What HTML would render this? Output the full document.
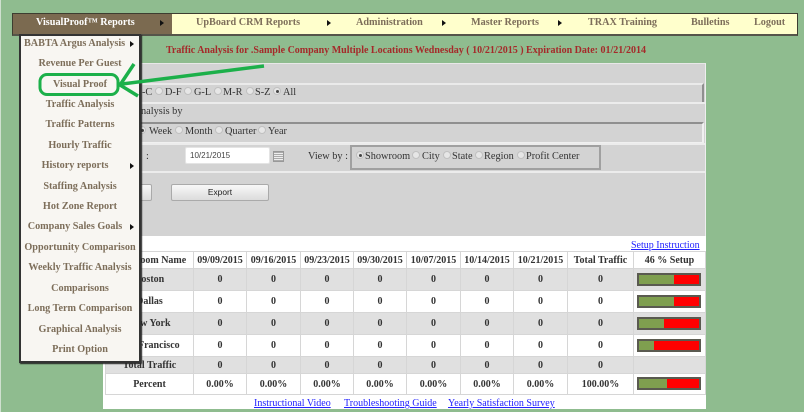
<!DOCTYPE html>
<html><head><meta charset="utf-8">
<style>
html,body{margin:0;padding:0}
body{width:804px;height:412px;overflow:hidden;position:relative;background:#8fbc8f;font-family:"Liberation Serif",serif;color:#333;filter:blur(.3px)}
div,span,a{position:absolute;white-space:nowrap}
.m{top:13px;height:20px;line-height:20px;font-size:10.2px;font-weight:bold;color:#7d6e5a}
.tri{width:0;height:0;border-left:4px solid #111;border-top:3.5px solid transparent;border-bottom:3.5px solid transparent}
.i{left:21px;width:118px;text-align:center;font-size:10.2px;font-weight:bold;color:#7d6e5a;height:20px;line-height:20px;margin-top:2px}
.r{width:6px;height:6px;border-radius:50%;background:#e6e6e6;border:1px solid #c0c0c0}
.r.c:after{content:"";position:absolute;left:1.5px;top:1.5px;width:3px;height:3px;border-radius:50%;background:#444}
.t{font-size:10.3px;color:#333;line-height:14px;height:14px;margin-top:1px}
a{color:#22f;text-decoration:underline;font-size:10px;line-height:14px}
table{position:absolute;left:105px;top:251px;width:600px;border-collapse:collapse;table-layout:fixed;font-size:10px;font-weight:bold;color:#333;background:#fff}
td{border:1px solid #d6d6d6;text-align:center;padding:0;white-space:nowrap;overflow:hidden}
tr.g td{background:#e0e0e0}
.b{left:637px;width:60px;height:9px;background:#f00;border:2px solid #5a5a50}
.b i{display:block;height:9px;background:#7f9f4f}
</style></head><body>
<div style="left:0;top:0;width:1px;height:412px;background:#cfe0cf"></div>

<div style="left:12px;top:13px;width:784px;height:20px;background:#ffc;border:1px solid #3d3d30;border-bottom:2px solid #55554a"></div>
<div style="left:13px;top:14px;width:159px;height:20px;background:#7b6a50"></div>
<div class="m" style="left:36px;color:#fff">VisualProof™ Reports</div>
<div class="tri" style="left:160px;top:20px"></div>
<div class="m" style="left:196px">UpBoard CRM Reports</div>
<div class="tri" style="left:327px;top:20px"></div>
<div class="m" style="left:356px">Administration</div>
<div class="tri" style="left:442px;top:20px"></div>
<div class="m" style="left:471px">Master Reports</div>
<div class="tri" style="left:558px;top:20px"></div>
<div class="m" style="left:588px">TRAX Training</div>
<div class="m" style="left:691px">Bulletins</div>
<div class="m" style="left:754px">Logout</div>

<div style="left:166px;top:43px;font-size:10px;font-weight:bold;color:#a52a2a;line-height:16px">Traffic Analysis for .Sample Company Multiple Locations Wednesday ( 10/21/2015 ) Expiration Date: 01/21/2014</div>

<div style="left:103px;top:63px;width:602px;height:173px;background:#d3d3d3;border-top:1px solid #e8e8e8;border-right:1px solid #eee"></div>
<div style="left:103px;top:236px;width:603px;height:173px;background:#fff"></div>

<div style="left:104px;top:83px;width:598px;height:17px;border-top:2px solid #eaeaea;border-right:2px solid #8f8f8f;border-bottom:2px solid #8f8f8f"></div>
<div style="left:104px;top:102px;width:601px;height:2px;background:#ececec"></div>
<div style="left:104px;top:122px;width:598px;height:18px;border-top:2px solid #8f8f8f;border-right:2px solid #f0f0f0;border-bottom:2px solid #f0f0f0"></div>
<div style="left:104px;top:143px;width:601px;height:2px;background:#ececec"></div>
<div style="left:104px;top:171px;width:601px;height:2px;background:#ececec"></div>

<div class="t" style="left:142px;top:85px">-C</div>
<div class="r" style="left:155px;top:87px"></div><div class="t" style="left:165px;top:85px">D-F</div>
<div class="r" style="left:184px;top:87px"></div><div class="t" style="left:194px;top:85px">G-L</div>
<div class="r" style="left:214px;top:87px"></div><div class="t" style="left:223px;top:85px">M-R</div>
<div class="r" style="left:246px;top:87px"></div><div class="t" style="left:255px;top:85px">S-Z</div>
<div class="r c" style="left:273px;top:87px"></div><div class="t" style="left:283px;top:85px">All</div>
<div class="t" style="left:141px;top:104px">nalysis by</div>
<div class="r c" style="left:138px;top:126px"></div><div class="t" style="left:149px;top:124px">Week</div>
<div class="r" style="left:175px;top:126px"></div><div class="t" style="left:185px;top:124px">Month</div>
<div class="r" style="left:215px;top:126px"></div><div class="t" style="left:225px;top:124px">Quarter</div>
<div class="r" style="left:258px;top:126px"></div><div class="t" style="left:268px;top:124px">Year</div>
<div class="t" style="left:146px;top:149px">:</div>

<div style="left:186px;top:148px;width:83px;height:15px;background:#fff;border-radius:1px;box-shadow:0 0 0 1px #e4e4e4;font:8px/16px 'Liberation Sans',sans-serif;color:#444;text-indent:4px">10/21/2015</div>
<div style="left:273px;top:151px;width:9px;height:9px;border:1px solid #999;background:repeating-linear-gradient(0deg,#aaa 0 1px,#eee 1px 2px)"></div>
<div class="t" style="left:308px;top:149px">View by :</div>
<div style="left:350px;top:145px;width:247px;height:21px;border:2px solid #a0a0a0"></div>
<div class="r c" style="left:356px;top:151px"></div><div class="t" style="left:365px;top:149px">Showroom</div>
<div class="r" style="left:412px;top:151px"></div><div class="t" style="left:422px;top:149px">City</div>
<div class="r" style="left:443px;top:151px"></div><div class="t" style="left:452px;top:149px">State</div>
<div class="r" style="left:475px;top:151px"></div><div class="t" style="left:484px;top:149px">Region</div>
<div class="r" style="left:517px;top:151px"></div><div class="t" style="left:526px;top:149px">Profit Center</div>

<div style="left:120px;top:184px;width:30px;height:15px;background:linear-gradient(#f8f8f8,#dcdcdc);border:1px solid #aaa;border-radius:2px"></div>
<div style="left:171px;top:184px;width:96px;height:15px;background:linear-gradient(#f8f8f8,#dcdcdc);border:1px solid #aaa;border-radius:2px;text-align:center;font:8.4px/15px 'Liberation Sans',sans-serif;color:#222">Export</div>

<a href="#" style="left:631px;top:239px">Setup Instruction</a>

<table>
<colgroup><col style="width:88px"><col style="width:53px"><col style="width:54px"><col style="width:53px"><col style="width:53px"><col style="width:54px"><col style="width:53px"><col style="width:54px"><col style="width:66px"><col style="width:72px"></colgroup>
<tr style="height:17px"><td>Showroom Name</td><td>09/09/2015</td><td>09/16/2015</td><td>09/23/2015</td><td>09/30/2015</td><td>10/07/2015</td><td>10/14/2015</td><td>10/21/2015</td><td>Total Traffic</td><td>46 % Setup</td></tr>
<tr class="g" style="height:22px"><td>Boston</td><td>0</td><td>0</td><td>0</td><td>0</td><td>0</td><td>0</td><td>0</td><td>0</td><td></td></tr>
<tr style="height:22px"><td>Dallas</td><td>0</td><td>0</td><td>0</td><td>0</td><td>0</td><td>0</td><td>0</td><td>0</td><td></td></tr>
<tr class="g" style="height:22px"><td>New York</td><td>0</td><td>0</td><td>0</td><td>0</td><td>0</td><td>0</td><td>0</td><td>0</td><td></td></tr>
<tr style="height:22px"><td>San Francisco</td><td>0</td><td>0</td><td>0</td><td>0</td><td>0</td><td>0</td><td>0</td><td>0</td><td></td></tr>
<tr class="g" style="height:17px"><td>Total Traffic</td><td>0</td><td>0</td><td>0</td><td>0</td><td>0</td><td>0</td><td>0</td><td>0</td><td></td></tr>
<tr style="height:21px"><td>Percent</td><td>0.00%</td><td>0.00%</td><td>0.00%</td><td>0.00%</td><td>0.00%</td><td>0.00%</td><td>0.00%</td><td>100.00%</td><td></td></tr>
</table>

<div class="b" style="top:273px"><i style="width:35px"></i></div>
<div class="b" style="top:295px"><i style="width:35px"></i></div>
<div class="b" style="top:317px"><i style="width:25px"></i></div>
<div class="b" style="top:339px"><i style="width:15px"></i></div>
<div class="b" style="top:377px"><i style="width:28px"></i></div>

<a href="#" style="left:254px;top:397px">Instructional Video</a>
<a href="#" style="left:344px;top:397px">Troubleshooting Guide</a>
<a href="#" style="left:448px;top:397px">Yearly Satisfaction Survey</a>

<div style="left:19px;top:34px;width:118px;height:325px;background:#f8f6f2;border:2px solid #333;box-shadow:1px 1px 1px #222"></div>
<div class="i" style="top:32px;text-align:left;text-indent:3px">BABTA Argus Analysis</div><div class="tri" style="left:130px;top:41px"></div>
<div class="i" style="top:52px">Revenue Per Guest</div>
<div class="i" style="top:73px">Visual Proof</div>
<div class="i" style="top:93px">Traffic Analysis</div>
<div class="i" style="top:113px">Traffic Patterns</div>
<div class="i" style="top:134px">Hourly Traffic</div>
<div class="i" style="top:154px;left:21px;width:108px">History reports</div><div class="tri" style="left:130px;top:163px"></div>
<div class="i" style="top:175px">Staffing Analysis</div>
<div class="i" style="top:195px">Hot Zone Report</div>
<div class="i" style="top:215px;width:108px">Company Sales Goals</div><div class="tri" style="left:130px;top:224px"></div>
<div class="i" style="top:236px">Opportunity Comparison</div>
<div class="i" style="top:256px">Weekly Traffic Analysis</div>
<div class="i" style="top:277px">Comparisons</div>
<div class="i" style="top:297px">Long Term Comparison</div>
<div class="i" style="top:318px">Graphical Analysis</div>
<div class="i" style="top:338px">Print Option</div>

<svg style="position:absolute;left:0;top:0" width="804" height="412" viewBox="0 0 804 412">
<rect x="40" y="74.500" width="78" height="20" rx="7" fill="none" stroke="#1cb04a" stroke-width="3"/>
<path d="M264 66L122 84M134 64L120 85L138 96" fill="none" stroke="#1cb04a" stroke-width="3.500"/>
</svg>
</body></html>
